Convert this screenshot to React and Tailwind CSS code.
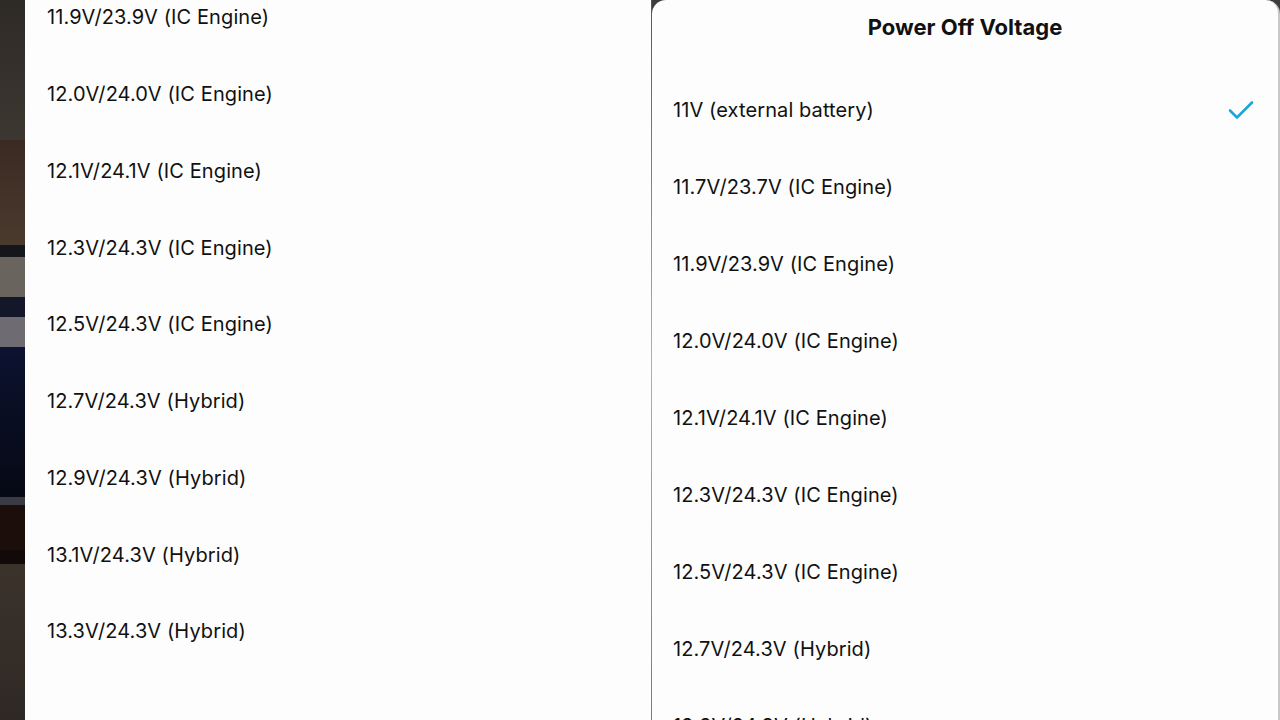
import React from 'react';

const leftOptions = [
  '11.9V/23.9V (IC Engine)',
  '12.0V/24.0V (IC Engine)',
  '12.1V/24.1V (IC Engine)',
  '12.3V/24.3V (IC Engine)',
  '12.5V/24.3V (IC Engine)',
  '12.7V/24.3V (Hybrid)',
  '12.9V/24.3V (Hybrid)',
  '13.1V/24.3V (Hybrid)',
  '13.3V/24.3V (Hybrid)',
];

const rightOptions = [
  '11V (external battery)',
  '11.7V/23.7V (IC Engine)',
  '11.9V/23.9V (IC Engine)',
  '12.0V/24.0V (IC Engine)',
  '12.1V/24.1V (IC Engine)',
  '12.3V/24.3V (IC Engine)',
  '12.5V/24.3V (IC Engine)',
  '12.7V/24.3V (Hybrid)',
  '12.9V/24.3V (Hybrid)',
];

const Check = () => (
  <svg width="26" height="20" viewBox="0 0 26 20" fill="none">
    <path d="M2 10.5l7 7L24 2.5" stroke="#1aa7dd" strokeWidth="2.6" strokeLinecap="round" strokeLinejoin="round" />
  </svg>
);

// blurry photo edge on the far left
const Backdrop = () => (
  <div className="w-[25px] h-full flex flex-col shrink-0">
    <div className="h-[140px] bg-gradient-to-b from-[#2e2a27] to-[#3d3731]" />
    <div className="h-[105px] bg-gradient-to-b from-[#3a2a22] to-[#4a3a2e]" />
    <div className="h-[12px] bg-[#14161c]" />
    <div className="h-[40px] bg-[#6a645e]" />
    <div className="h-[20px] bg-[#14172a]" />
    <div className="h-[30px] bg-[#6e6c72]" />
    <div className="h-[150px] bg-gradient-to-b from-[#0c1230] to-[#060914]" />
    <div className="h-[8px] bg-[#3a3b44]" />
    <div className="h-[45px] bg-[#1c0e0b]" />
    <div className="h-[14px] bg-[#120a08]" />
    <div className="flex-1 bg-gradient-to-b from-[#3b322b] to-[#2f2925]" />
  </div>
);

export default function App() {
  return (
    <div
      className="w-[1280px] h-[720px] flex overflow-hidden bg-[#2a2a2a] text-[#111111]"
      style={{ fontFamily: 'Inter, "Noto Sans", sans-serif' }}
    >
      <Backdrop />

      <div className="w-[626px] h-full bg-[#fdfdfd] shrink-0 overflow-hidden">
        <div className="-mt-[21px] px-[22px]">
          {leftOptions.map((o) => (
            <div key={o} className="h-[76.75px] flex items-center text-[20px] tracking-[0.1px]">
              {o}
            </div>
          ))}
        </div>
      </div>

      <div className="w-[1px] h-full bg-gradient-to-b from-[#55565c] via-[#c9a79a] to-[#6f7a99] shrink-0" />

      <div className="flex-1 h-full bg-[#3c3c3c] flex">
        <div className="flex-1 h-full bg-[#fdfdfd] rounded-t-[14px] border-r-[2px] border-[#c8c8c8] overflow-hidden">
          <div className="h-[54px] flex items-center justify-center text-[22px] font-bold">
            Power Off Voltage
          </div>
          <div className="mt-[17.5px] pl-[21px] pr-[24px]">
            {rightOptions.map((o, i) => (
              <div key={o} className="h-[77px] flex items-center justify-between text-[20px] tracking-[0.1px]">
                <span>{o}</span>
                {i === 0 && <Check />}
              </div>
            ))}
          </div>
        </div>
      </div>
    </div>
  );
}
